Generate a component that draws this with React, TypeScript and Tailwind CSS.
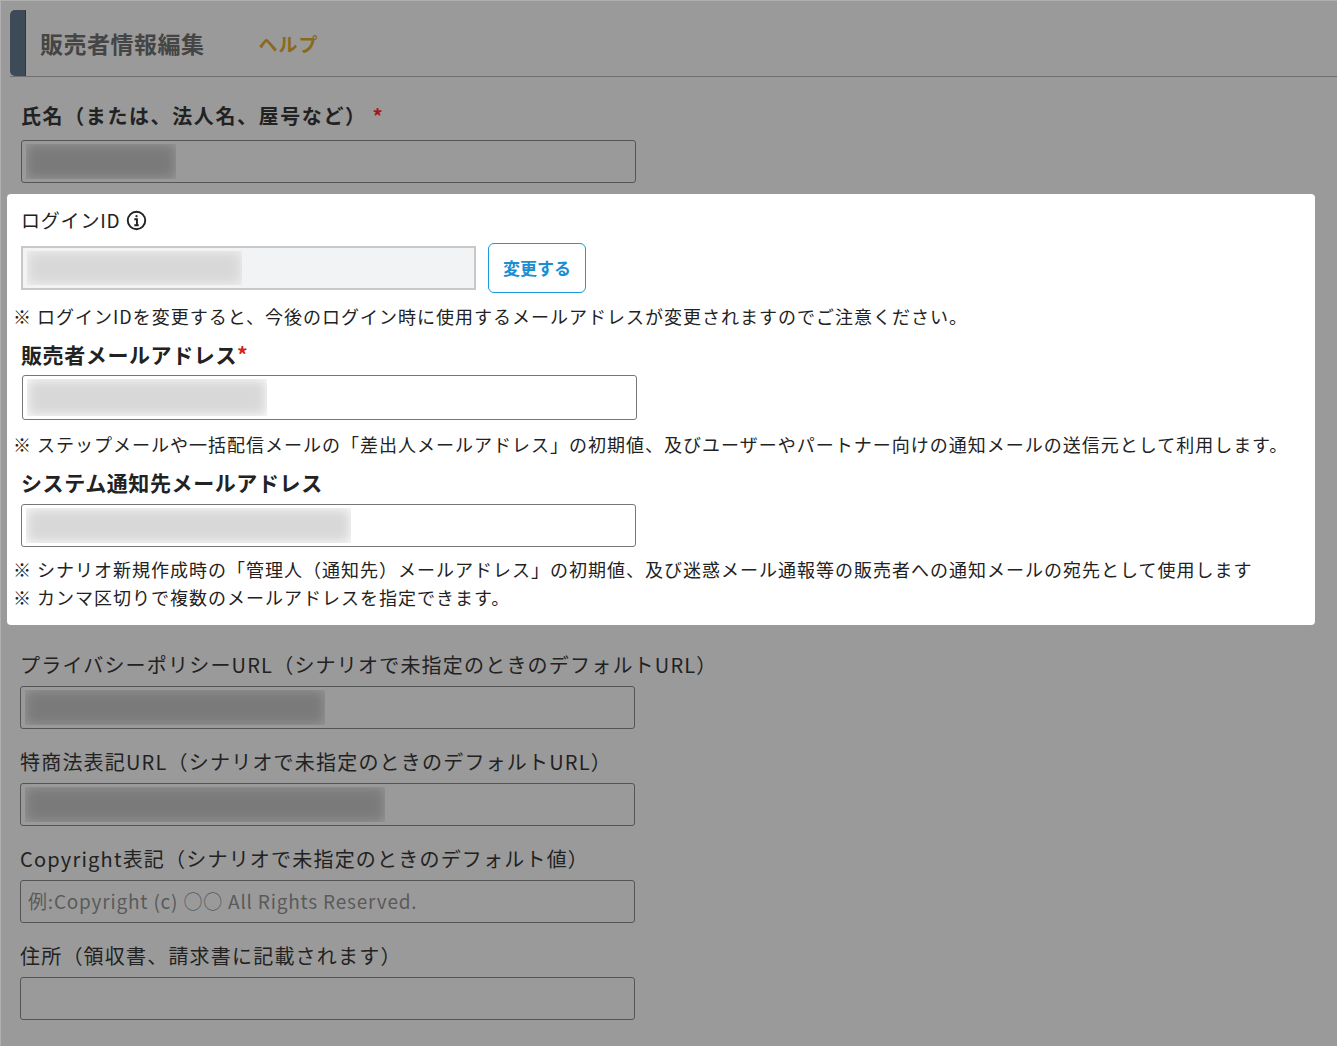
import React from "react";

const F = { fontFamily: '"Noto Sans CJK JP","Noto Sans",sans-serif' };

function Blur({ w, dark }: { w: number; dark?: boolean }) {
  return (
    <div className="absolute left-[4px] top-[3px] bottom-[3px] overflow-hidden" style={{ width: w }}>
      <div className={`w-full h-full blur-[6px] ${dark ? "bg-[#7a7a7a]" : "bg-[#d8d8d8]"}`} />
    </div>
  );
}

function DimInput({ blur, text }: { blur?: number; text?: string }) {
  return (
    <div className="relative w-[615px] h-[43px] border border-[#555] rounded-[3px] bg-[#9a9a9a] flex items-center px-[7px] overflow-hidden">
      {blur ? <Blur w={blur} dark /> : null}
      {text ? <span className="text-[19px] text-[#5a5a5a] tracking-[0.8px]">{text}</span> : null}
    </div>
  );
}

export default function App() {
  return (
    <div className="w-[1337px] h-[1046px] bg-[#9a9a9a] overflow-hidden border-l border-t border-[#b0b0b0]" style={F}>
      <div className="mt-[9px] ml-[9px] h-[67px] flex items-center border-b border-[#6f6f6f]">
        <div className="w-[16px] h-full bg-[#3d4a57] rounded-l-[5px] border-r border-[#2c3540]" />
        <div className="ml-[14px] text-[23px] font-bold text-[#454545] tracking-[0.5px]">販売者情報編集</div>
        <div className="ml-[54px] text-[19px] font-bold text-[#8a6a1a] mt-[2px] tracking-[1px]">ヘルプ</div>
      </div>
      <div className="ml-[20px] mt-[24px] text-[20px] font-bold text-[#222] tracking-[1.6px]">
        氏名（または、法人名、屋号など）<span className="text-[#a01818] ml-[6px]">*</span>
      </div>
      <div className="ml-[20px] mt-[9px]">
        <DimInput blur={150} />
      </div>
      <div className="ml-[6px] mt-[11px] w-[1308px] bg-white rounded-[4px] pt-[12px] pb-[14px] px-[6px] text-[#222]">
        <div className="ml-[8px] text-[19px] flex items-center gap-[6px] tracking-[0.8px]">
          ログインID
          <svg width="21" height="21" viewBox="0 0 24 24" fill="none" stroke="#222" strokeWidth="2.2">
            <circle cx="12" cy="12" r="10" />
            <circle cx="12" cy="7" r="1.3" fill="#222" stroke="none" />
            <path d="M9.5 10.5h3v7M9.5 17.5h5" />
          </svg>
        </div>
        <div className="ml-[8px] mt-[8px] flex items-center gap-[12px]">
          <div className="relative w-[455px] h-[44px] bg-[#f2f3f5] border-2 border-[#c8c8c8]">
            <Blur w={215} />
          </div>
          <div className="w-[98px] h-[50px] border-[1.5px] border-[#1a9ad6] rounded-[6px] flex items-center justify-center text-[#1a8fd0] font-bold text-[17px]">変更する</div>
        </div>
        <div className="mt-[10px] text-[18px] tracking-[1px]">※ ログインIDを変更すると、今後のログイン時に使用するメールアドレスが変更されますのでご注意ください。</div>
        <div className="ml-[8px] mt-[9px] text-[21px] font-bold tracking-[0.6px]">販売者メールアドレス<span className="text-[#d42020]">*</span></div>
        <div className="ml-[9px] mt-[5px] relative w-[615px] h-[45px] border border-[#777] rounded-[3px]">
          <Blur w={240} />
        </div>
        <div className="mt-[11px] text-[18px] tracking-[1px]">※ ステップメールや一括配信メールの「差出人メールアドレス」の初期値、及びユーザーやパートナー向けの通知メールの送信元として利用します。</div>
        <div className="ml-[8px] mt-[9px] text-[21px] font-bold tracking-[0.6px]">システム通知先メールアドレス</div>
        <div className="ml-[8px] mt-[5px] relative w-[615px] h-[43px] border border-[#777] rounded-[3px]">
          <Blur w={325} />
        </div>
        <div className="mt-[8px] text-[18px] leading-[28px] tracking-[1px]">※ シナリオ新規作成時の「管理人（通知先）メールアドレス」の初期値、及び迷惑メール通報等の販売者への通知メールの宛先として使用します</div>
        <div className="text-[18px] leading-[28px] tracking-[1px]">※ カンマ区切りで複数のメールアドレスを指定できます。</div>
      </div>
      <div className="ml-[19px] mt-[25px] flex flex-col text-[20px] text-[#222] tracking-[1.2px]">
        <div>プライバシーポリシーURL（シナリオで未指定のときのデフォルトURL）</div>
        <div className="mt-[6px]"><DimInput blur={300} /></div>
        <div className="mt-[18px]">特商法表記URL（シナリオで未指定のときのデフォルトURL）</div>
        <div className="mt-[6px]"><DimInput blur={360} /></div>
        <div className="mt-[18px]">Copyright表記（シナリオで未指定のときのデフォルト値）</div>
        <div className="mt-[6px]"><DimInput text="例:Copyright (c) ○○ All Rights Reserved." /></div>
        <div className="mt-[18px]">住所（領収書、請求書に記載されます）</div>
        <div className="mt-[6px]"><DimInput /></div>
      </div>
    </div>
  );
}
